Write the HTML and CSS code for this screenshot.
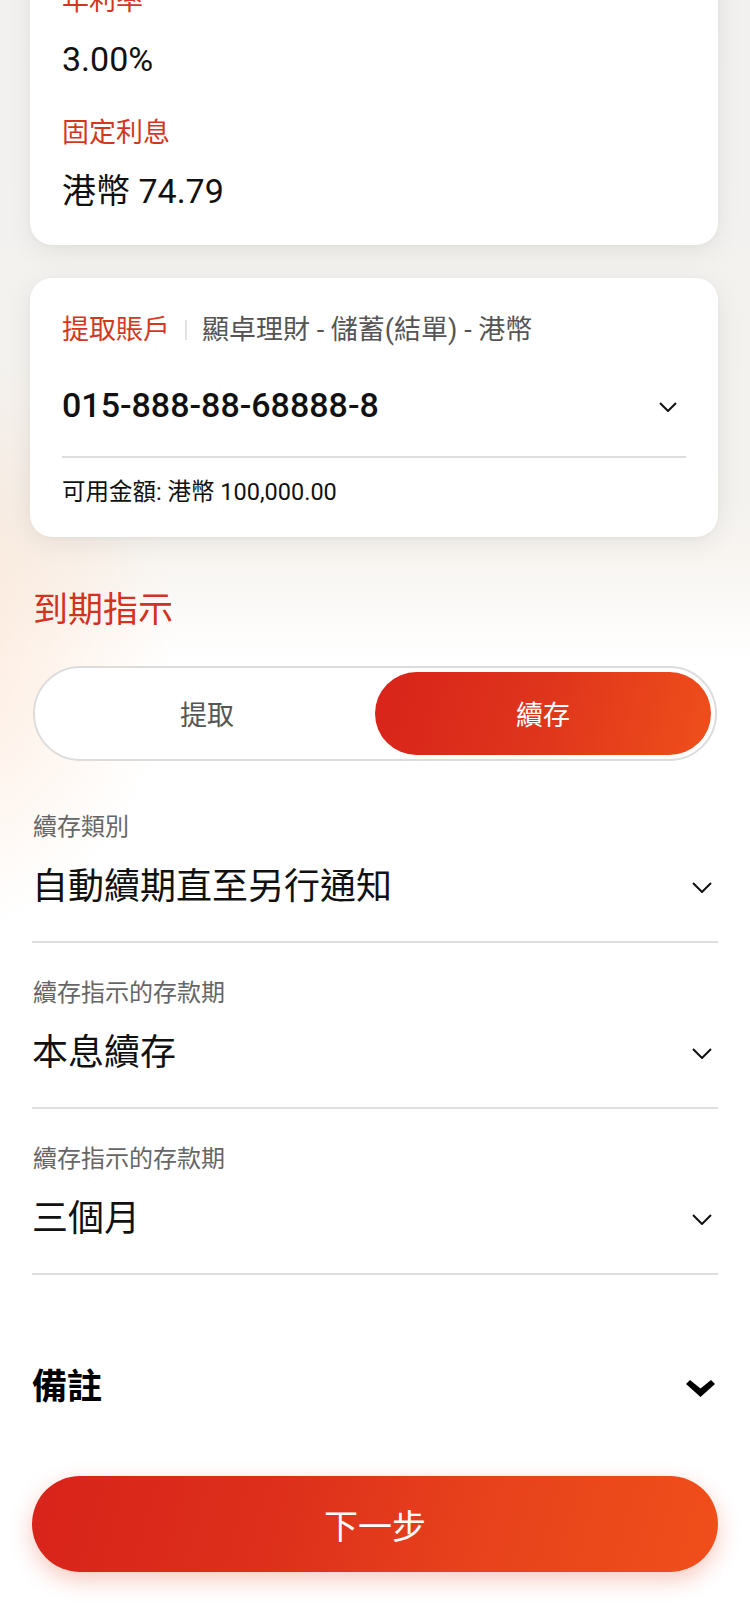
FILE: index.html
```html
<!DOCTYPE html>
<html lang="zh-Hant">
<head>
<meta charset="utf-8">
<title>到期指示</title>
<link rel="stylesheet" href="styles.css">
</head>
<body>
<div class="page">
  <section class="card card-rates">
    <div class="item">
      <div class="label">年利率</div>
      <div class="value">3.00%</div>
    </div>
    <div class="item">
      <div class="label">固定利息</div>
      <div class="value">港幣 74.79</div>
    </div>
  </section>

  <section class="card card-account">
    <div class="acct-head">
      <span class="label">提取賬戶</span>
      <span class="sep"></span>
      <span class="acct-name">顯卓理財 - 儲蓄(結單) - 港幣</span>
    </div>
    <div class="acct-select">
      <span class="acct-no">015-888-88-68888-8</span>
      <svg class="chev chev-card" width="18" height="10" viewBox="0 0 18 10"><polyline points="1,1 9,9 17,1" fill="none" stroke="#111" stroke-width="2"/></svg>
    </div>
    <div class="divider"></div>
    <div class="acct-bal">可用金額: 港幣 100,000.00</div>
  </section>

  <h2 class="section-title">到期指示</h2>

  <div class="toggle">
    <div class="opt">提取</div>
    <div class="opt active">續存</div>
  </div>

  <div class="fields">
    <div class="field">
      <div class="field-label">續存類別</div>
      <div class="field-row">
        <span class="field-value">自動續期直至另行通知</span>
        <svg class="chev" width="20" height="11" viewBox="0 0 20 11"><polyline points="1,1 10,10 19,1" fill="none" stroke="#111" stroke-width="2"/></svg>
      </div>
    </div>
    <div class="field">
      <div class="field-label">續存指示的存款期</div>
      <div class="field-row">
        <span class="field-value">本息續存</span>
        <svg class="chev" width="20" height="11" viewBox="0 0 20 11"><polyline points="1,1 10,10 19,1" fill="none" stroke="#111" stroke-width="2"/></svg>
      </div>
    </div>
    <div class="field">
      <div class="field-label">續存指示的存款期</div>
      <div class="field-row">
        <span class="field-value">三個月</span>
        <svg class="chev" width="20" height="11" viewBox="0 0 20 11"><polyline points="1,1 10,10 19,1" fill="none" stroke="#111" stroke-width="2"/></svg>
      </div>
    </div>
  </div>

  <div class="remarks">
    <span class="remarks-title">備註</span>
    <svg class="chev-bold" width="29" height="17" viewBox="0 0 29 17"><polygon points="0,4 4,0 14.5,8.5 25,0 29,4 14.5,17" fill="#000"/></svg>
  </div>

  <div class="next">下一步</div>
</div>
</body>
</html>
```

FILE: styles.css
```css
* { box-sizing: border-box; }

html, body {
  margin: 0;
  padding: 0;
}

body {
  width: 750px;
  min-height: 1624px;
  overflow: hidden;
  font-family: "Roboto", "Noto Sans CJK TC", sans-serif;
  color: #111;
  background:
    radial-gradient(ellipse 300px 380px at -60px 640px, rgba(252, 220, 196, 0.6), rgba(255, 255, 255, 0) 78%),
    linear-gradient(180deg, #f2f1ef 0px, #f4f2ef 500px, #f8f5f1 560px, #ffffff 660px);
}

.page {
  padding: 0 32px;
}

.card {
  background: #fff;
  border-radius: 22px;
  margin-left: -2px;
  padding: 0 32px;
  box-shadow: 0 6px 26px rgba(0, 0, 0, 0.07), 0 1px 4px rgba(0, 0, 0, 0.03);
}

.card-rates {
  margin-top: -51px;
  padding-top: 34px;
  padding-bottom: 32px;
}

.item + .item {
  margin-top: 34px;
}

.label {
  font-size: 27px;
  line-height: 36px;
  color: #d2381f;
}

.value {
  margin-top: 18px;
  font-size: 34px;
  line-height: 44px;
  color: #111;
}

.card-account {
  margin-top: 33px;
  padding-top: 34px;
  padding-bottom: 29px;
}

.acct-head {
  display: flex;
  align-items: center;
  height: 36px;
}

.sep {
  width: 2px;
  height: 20px;
  background: #e2e2e2;
  margin: 0 15px 0 15px;
}

.acct-name {
  font-size: 27px;
  line-height: 36px;
  color: #555;
}

.acct-select {
  margin-top: 33px;
  display: flex;
  align-items: center;
  justify-content: space-between;
  height: 48px;
}

.acct-no {
  font-size: 34px;
  font-weight: 500;
  line-height: 48px;
  color: #111;
}

.chev-card {
  margin-right: 9px;
  margin-top: 4px;
}

.divider {
  margin-top: 27px;
  height: 2px;
  background: #dedede;
}

.acct-bal {
  margin-top: 18px;
  font-size: 23.5px;
  line-height: 32px;
  color: #111;
}

.section-title {
  margin: 50px 0 0 1px;
  font-size: 35px;
  font-weight: 400;
  line-height: 48px;
  color: #d3321f;
}

.toggle {
  margin: 31px 1px 0 1px;
  display: flex;
  border: 2px solid #dcdcdc;
  border-radius: 48px;
  padding: 4px;
  background: #fff;
}

.opt {
  flex: 1;
  height: 83px;
  border-radius: 42px;
  display: flex;
  align-items: center;
  justify-content: center;
  font-size: 27px;
  color: #555;
}

.opt.active {
  color: #fff;
  background: linear-gradient(105deg, #d8231a 0%, #df351c 50%, #ef4f1b 100%);
}

.fields {
  margin-top: 16px;
}

.field {
  padding-top: 34px;
  padding-bottom: 30px;
  border-bottom: 2px solid #dedede;
}

.field-label {
  font-size: 24px;
  line-height: 32px;
  color: #666;
  padding-left: 1px;
}

.field-row {
  margin-top: 20px;
  display: flex;
  align-items: center;
  justify-content: space-between;
  height: 48px;
}

.field-value {
  font-size: 36px;
  line-height: 48px;
  color: #111;
}

.field-row .chev {
  margin-right: 6px;
}

.remarks {
  margin-top: 89px;
  display: flex;
  align-items: center;
  justify-content: space-between;
  height: 48px;
}

.remarks-title {
  font-size: 35px;
  font-weight: 700;
  line-height: 48px;
  color: #000;
}

.chev-bold {
  margin-right: 3px;
}

.next {
  margin-top: 64px;
  height: 96px;
  border-radius: 48px;
  display: flex;
  align-items: center;
  justify-content: center;
  font-size: 34px;
  color: #fff;
  background: linear-gradient(105deg, #d8231a 0%, #dd2f1b 35%, #e7421c 65%, #f04f1a 100%);
  box-shadow: 0 8px 22px rgba(226, 60, 30, 0.28);
}
```
